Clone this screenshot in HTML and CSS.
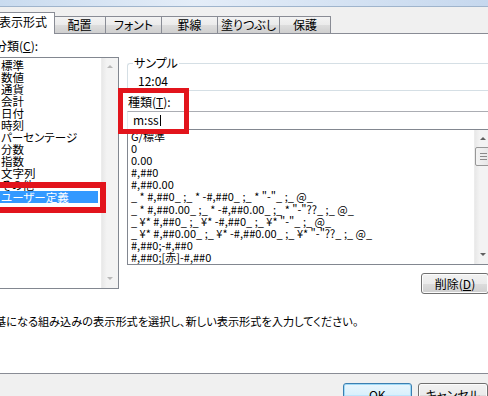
FILE: index.html
```html
<!DOCTYPE html>
<html lang="ja">
<head>
  <meta charset="UTF-8">
  <title>セルの書式設定</title>
  <link rel="stylesheet" href="styles.css">
</head>
<body>
  <div class="frame"></div>
  <div class="tabs">
    <div class="tab active">表示形式</div>
    <div class="tab w-haichi">配置</div>
    <div class="tab w-font">フォント</div>
    <div class="tab w-keisen">罫線</div>
    <div class="tab w-nuri">塗りつぶし</div>
    <div class="tab w-hogo">保護</div>
  </div>

  <div class="page">
    <div class="columns">
      <div class="left">
        <div class="label">分類(<u>C</u>):</div>
        <div class="catlist">
          <ul class="items">
            <li>標準</li>
            <li>数値</li>
            <li>通貨</li>
            <li>会計</li>
            <li>日付</li>
            <li>時刻</li>
            <li>パーセンテージ</li>
            <li>分数</li>
            <li>指数</li>
            <li>文字列</li>
            <li>その他</li>
            <li class="selected">ユーザー定義</li>
          </ul>
          <div class="vscroll">
            <span class="arrow up dim"></span>
            <span class="arrow down dim"></span>
          </div>
        </div>
      </div>

      <div class="right">
        <div class="group">
          <span class="legend">サンプル</span>
          <div class="sample">12:04</div>
        </div>
        <div class="label type-label">種類(<u>T</u>):</div>
        <div class="input">m:ss<span class="caret"></span></div>
        <div class="fmtlist">
          <ul class="fmt">
            <li>G/標準</li>
            <li>0</li>
            <li>0.00</li>
            <li>#,##0</li>
            <li>#,##0.00</li>
            <li>_ * #,##0_ ;_ * -#,##0_ ;_ * "-"_ ;_ @_</li>
            <li>_ * #,##0.00_ ;_ * -#,##0.00_ ;_ * "-"??_ ;_ @_</li>
            <li>_ ¥* #,##0_ ;_ ¥* -#,##0_ ;_ ¥* "-"_ ;_ @_</li>
            <li>_ ¥* #,##0.00_ ;_ ¥* -#,##0.00_ ;_ ¥* "-"??_ ;_ @_</li>
            <li>#,##0;-#,##0</li>
            <li>#,##0;[赤]-#,##0</li>
          </ul>
          <div class="vscroll">
            <span class="arrow up"></span>
            <span class="thumb"><i></i><i></i><i></i></span>
            <span class="arrow down"></span>
          </div>
        </div>
        <div class="btnrow">
          <button class="btn delete">削除(<u>D</u>)</button>
        </div>
      </div>
    </div>
    <p class="desc">基になる組み込みの表示形式を選択し、新しい表示形式を入力してください。</p>
  </div>

  <div class="footer">
    <button class="btn ok">OK</button>
    <button class="btn cancel">キャンセル</button>
  </div>

  <div class="mark mark-category"></div>
  <div class="mark mark-type"></div>
</body>
</html>
```

FILE: styles.css
```css
* {
  box-sizing: border-box;
}
body {
  margin: 0;
  width: 488px;
  height: 396px;
  overflow: hidden;
  position: relative;
  background: #f0f0f0;
  color: #000;
  font-family: "Noto Sans CJK JP", sans-serif;
  font-size: 12px;
  font-feature-settings: "palt";
}
ul {
  margin: 0;
  padding: 0;
  list-style: none;
}
u {
  text-decoration-thickness: 1px;
  text-underline-offset: 1px;
}

/* window edge + tab strip */
.frame {
  height: 7px;
  background: linear-gradient(90deg, #c9dbef, #e4edf8 40%, #c6d8ee);
  border-bottom: 1px solid #9fb4cc;
}
.tabs {
  display: flex;
  align-items: flex-end;
  height: 26px;
  margin-left: -9px;
}
.tab {
  height: 17px;
  line-height: 16px;
  text-align: center;
  border: 1px solid #898c95;
  border-bottom: none;
  margin-left: -1px;
  background: linear-gradient(#f3f3f3, #ebebeb 50%, #dddddd 51%, #cfcfcf);
  white-space: nowrap;
}
.tab.active {
  position: relative;
  z-index: 2;
  height: 22px;
  width: 64px;
  margin-left: 0;
  margin-bottom: -1px;
  line-height: 18px;
  background: #fff;
}
.w-haichi { width: 53px; margin-left: -2px; }
.w-font { width: 57px; }
.w-keisen { width: 57px; }
.w-nuri { width: 63px; }
.w-hogo { width: 52px; }

/* tab page */
.page {
  margin-left: -10px;
  width: 520px;
  height: 341px;
  padding: 5px 0 0 4px;
  background: #fff;
  border: 1px solid #898c95;
}
.columns {
  display: flex;
  gap: 8px;
}
.label {
  line-height: 14px;
  height: 14px;
}
.left {
  width: 124px;
}
.catlist {
  margin-top: 4px;
  height: 232px;
  display: flex;
  border: 1px solid #828790;
}
.items {
  flex: 1;
  padding: 1px 3px 0 0;
  font-size: 11.5px;
}
.items li {
  height: 12px;
  line-height: 12px;
  padding-left: 5px;
  white-space: nowrap;
}
.items li.selected {
  background: #3399ff;
  color: #fff;
}

.vscroll {
  position: relative;
  width: 17px;
  background: linear-gradient(90deg, #e8e8e8, #f3f3f3 30%, #f3f3f3);
  border-left: 1px solid #ececec;
}
.arrow {
  position: absolute;
  left: 5px;
  width: 0;
  height: 0;
  border-left: 3px solid transparent;
  border-right: 3px solid transparent;
}
.arrow.up {
  top: 7px;
  border-bottom: 3px solid #606060;
}
.arrow.down {
  bottom: 8px;
  border-top: 3px solid #606060;
}
.arrow.dim.up { border-bottom-color: #b8b8b8; }
.arrow.dim.down { border-top-color: #b8b8b8; }
.thumb {
  position: absolute;
  top: 17px;
  left: 0;
  width: 16px;
  height: 19px;
  display: flex;
  flex-direction: column;
  justify-content: center;
  align-items: center;
  gap: 2px;
  border: 1px solid #979797;
  border-radius: 2px;
  background: linear-gradient(90deg, #f3f3f3, #e6e6e6);
}
.thumb i {
  display: block;
  width: 7px;
  height: 1px;
  background: #8a8a8a;
}

.right {
  width: 364px;
  padding-top: 24px;
}
.group {
  height: 28px;
  border: 1px solid #d5dfe5;
  border-right: none;
  border-radius: 3px 0 0 3px;
  padding-left: 5px;
}
.legend {
  display: block;
  width: fit-content;
  margin-top: -8px;
  padding: 0 1px;
  line-height: 14px;
  background: #fff;
}
.sample {
  margin-top: 4px;
  padding-left: 5px;
  line-height: 14px;
}
.type-label {
  margin-top: 4px;
  padding-left: 1px;
}
.input {
  margin-top: 2px;
  height: 18px;
  line-height: 16px;
  padding-left: 5px;
  border: 1px solid #e3e9ef;
  border-top-color: #abadb3;
  border-bottom: none;
}
.caret {
  display: inline-block;
  width: 1px;
  height: 11px;
  margin-left: 1px;
  vertical-align: -1px;
  background: #000;
}
.fmtlist {
  height: 136px;
  display: flex;
  border: 1px solid #828790;
  border-right: none;
}
.fmt {
  flex: 1;
  padding-left: 3px;
  font-size: 11px;
}
.fmt li {
  height: 12.1px;
  line-height: 12.1px;
  white-space: pre;
}
.btnrow {
  display: flex;
  justify-content: flex-end;
  padding-right: 2px;
  margin-top: 8px;
}

.btn {
  font: inherit;
  font-size: 12px;
  height: 21px;
  padding: 0;
  color: #000;
  border: 1px solid #707070;
  border-radius: 3px;
  background: linear-gradient(#f2f2f2, #ebebeb 50%, #dddddd 51%, #cfcfcf);
  box-shadow: inset 0 0 0 1px #fcfcfc;
}
.delete {
  width: 68px;
}
.desc {
  margin: 20px 0 0;
  line-height: 14px;
  font-size: 11.2px;
  white-space: nowrap;
}

.footer {
  display: flex;
  gap: 6px;
  padding: 9px 0 0 343px;
}
.footer .btn {
  height: 23px;
}
.ok {
  width: 72px;
  border-color: #3c7fb1;
  box-shadow: inset 0 0 0 1px #9fd9f6;
  background: linear-gradient(#eaf6fd, #d9f0fc 50%, #bee6fd 51%, #a7d9f5);
}
.cancel {
  width: 74px;
}

/* red highlight marks drawn over the dialog */
.mark {
  position: absolute;
  border: 6px solid #e2141c;
}
.mark-category {
  left: -10px;
  top: 182px;
  width: 116px;
  height: 31px;
}
.mark-type {
  left: 118px;
  top: 88px;
  width: 71px;
  height: 46px;
  border-width: 5px;
}
```
